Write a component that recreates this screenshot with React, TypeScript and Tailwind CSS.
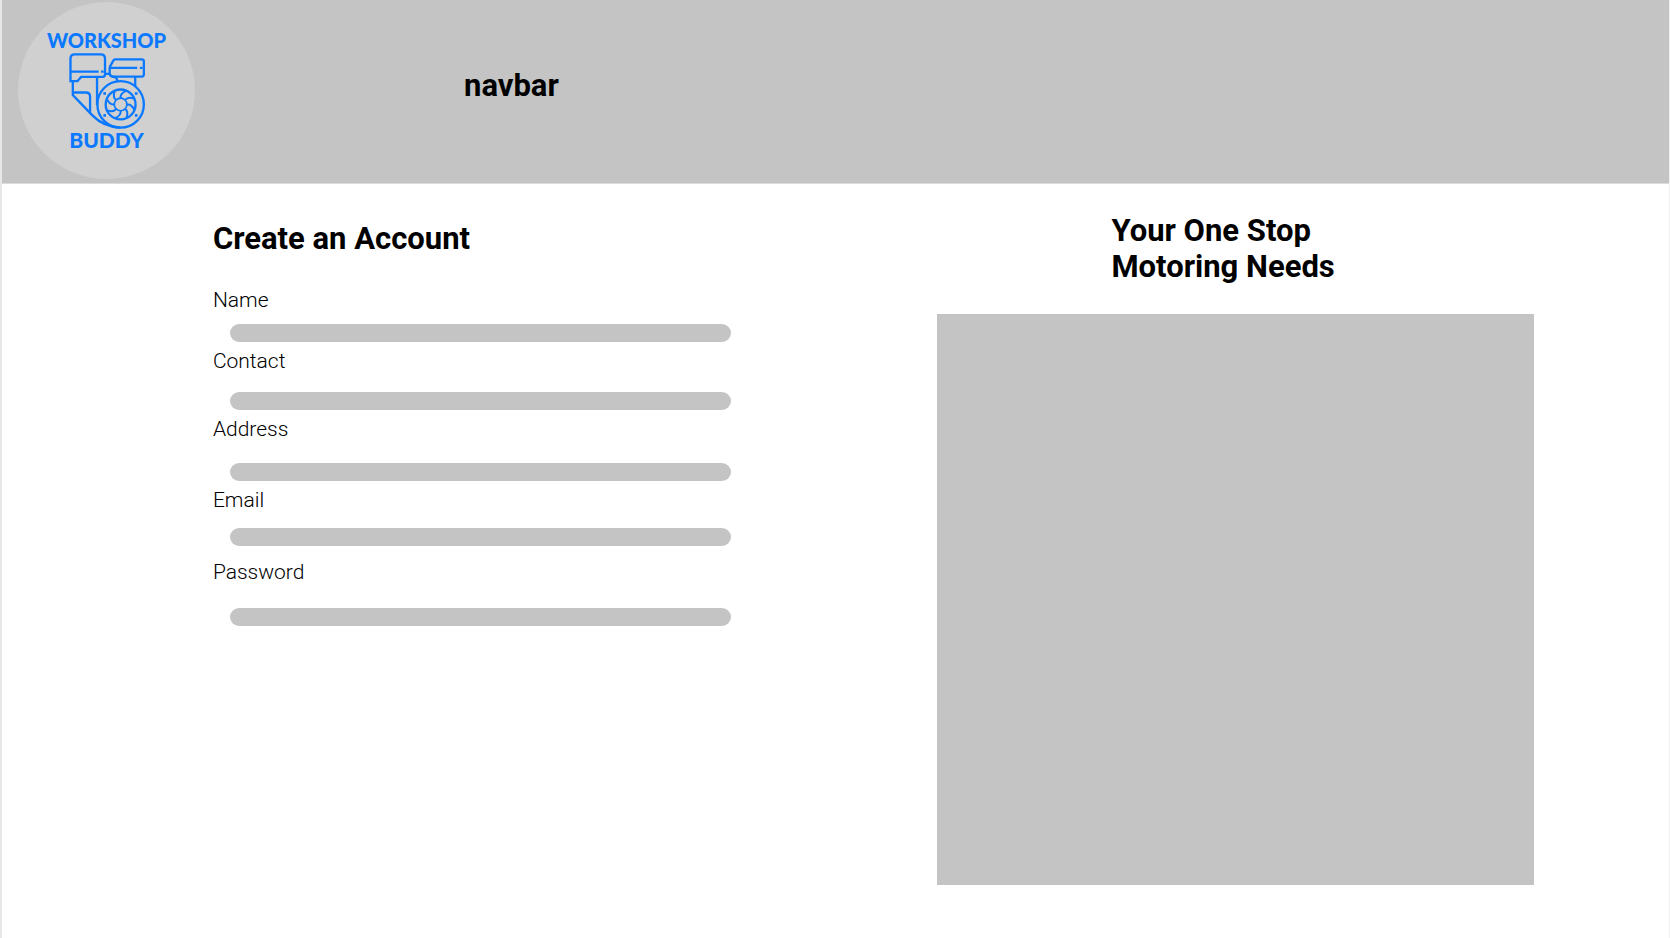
import React from "react";

type Field = {
  id: string;
  label: string;
  type: string;
  spacing: string;
};

const fields: Field[] = [
  { id: "name", label: "Name", type: "text", spacing: "gap-3 pb-[7px]" },
  { id: "contact", label: "Contact", type: "tel", spacing: "gap-[19px] pb-[7px]" },
  { id: "address", label: "Address", type: "text", spacing: "gap-[22px] pb-[7px]" },
  { id: "email", label: "Email", type: "email", spacing: "gap-4 pb-[14px]" },
  { id: "password", label: "Password", type: "password", spacing: "gap-6" },
];

const bladeAngles = [0, 45, 90, 135, 180, 225, 270, 315];

function EngineIcon() {
  return (
    <svg
      viewBox="20 20 240 235"
      className="h-[78px] w-20"
      fill="none"
      stroke="#0a78ff"
      strokeWidth="7"
      aria-hidden="true"
    >
      <path d="M30 108V40Q30 27 43 27H121Q134 27 134 40V88Q134 95 127 95H62L51 108Z" />
      <path d="M30 79H115M122 79H130" />
      <path d="M164 42H245Q251 42 251 48V87Q251 94 245 94H158Q148 94 148 84V70Q148 66 150 62L159 46Q161 42 164 42Z" />
      <path d="M148 68H231M239 68H247" />
      <path d="M134 86H148M155 94Q171 94 171 108M225 94V123" />
      <path d="M110 95V180M37 108V150L96 211Q130 246 181 248" />
      <path d="M37 142H76Q89 142 89 155V202" />
      <circle cx="181" cy="178" r="70" />
      <circle cx="181" cy="178" r="45" />
      <circle cx="181" cy="178" r="19" strokeWidth="5" />
      {bladeAngles.map((angle) => (
        <path
          key={angle}
          d="M181 159Q179 145 197 137"
          transform={`rotate(${angle} 181 178)`}
          strokeWidth="6"
        />
      ))}
      <g fill="#0a78ff" stroke="none">
        <rect x="129" y="141" width="8" height="8" />
        <rect x="224" y="141" width="8" height="8" />
        <rect x="129" y="207" width="8" height="8" />
        <rect x="224" y="207" width="8" height="8" />
      </g>
    </svg>
  );
}

function Logo() {
  return (
    <a
      href="#"
      className="flex size-[177px] shrink-0 flex-col items-center rounded-full bg-[#d0d0d0] pt-[26px] font-['Lato',sans-serif] font-black text-[#0a78ff]"
    >
      <span className="text-xl leading-6">WORKSHOP</span>
      <EngineIcon />
      <span className="text-[21px] leading-5">BUDDY</span>
    </a>
  );
}

export default function App() {
  return (
    <div className="min-h-screen border-r border-l-2 border-r-[#f0f0f0] border-l-[#e8e8e8] bg-white font-['Roboto',sans-serif] text-black">
      <header className="flex items-start border-b border-[#dcdcdc] bg-[#c4c4c4] pt-0.5 pb-1 pl-4">
        <Logo />
        <nav className="pt-[66px] pl-[269px] text-[31px] leading-9 font-bold">navbar</nav>
      </header>

      <main className="flex items-start pl-[12.65%]">
        <form className="w-[35.6%] pt-[37px]">
          <h1 className="pb-[31px] text-[31px] leading-9 font-bold">Create an Account</h1>
          {fields.map((field) => (
            <div key={field.id} className={`flex flex-col ${field.spacing}`}>
              <label htmlFor={field.id} className="text-[21px] leading-6 font-light">
                {field.label}
              </label>
              <input
                id={field.id}
                type={field.type}
                className="ml-[17px] h-[18px] rounded-full bg-[#c4c4c4] px-3 text-sm outline-none"
              />
            </div>
          ))}
        </form>

        <section className="ml-[14.1%] w-[41%] pt-[29px]">
          <h2 className="pb-[29px] pl-[29.3%] text-[31px] leading-9 font-bold">
            Your One Stop
            <br />
            Motoring Needs
          </h2>
          <div className="aspect-[597/571] bg-[#c4c4c4]" />
        </section>
      </main>
    </div>
  );
}
